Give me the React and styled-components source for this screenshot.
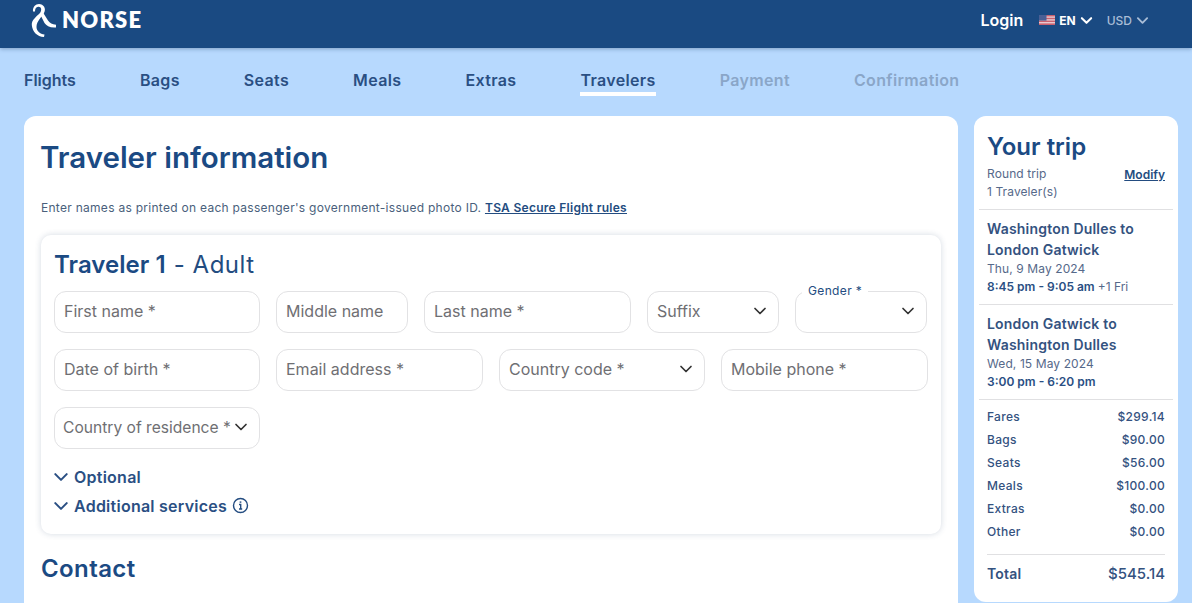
import React from "react";
import styled, { createGlobalStyle } from "styled-components";

const Global = createGlobalStyle`
  html, body { margin: 0; padding: 0; height: 100%; overflow: hidden; background: #b7d9fe; }
  body { font-family: Inter, "Liberation Sans", sans-serif; color: #1b4a83; }
  * { box-sizing: border-box; }
`;

const Page = styled.div`
  height: 603px;
  overflow: hidden;
  background: #b7d9fe;
`;
const Header = styled.header`
  height: 48px;
  background: #1a4a82;
  box-shadow: 0 1px 4px rgba(20, 50, 90, 0.35);
  display: flex;
  align-items: center;
  justify-content: space-between;
  padding: 0 43px 8px 31px;
  color: #fff;
`;
const Brand = styled.div`
  display: flex;
  align-items: center;
  gap: 5px;
`;
const BrandName = styled.span`
  font-family: Lato, sans-serif;
  font-weight: 800;
  font-size: 22px;
  letter-spacing: 1.2px;
  line-height: 24px;
`;
const HeaderRight = styled.div`
  display: flex;
  align-items: center;
  font-size: 12px;
`;
const Login = styled.span`
  font-size: 16px;
  font-weight: 600;
  margin-right: 16px;
`;
const Lang = styled.span`
  display: flex;
  align-items: center;
  gap: 4px;
  font-weight: 700;
  margin-right: 14px;
`;
const Currency = styled.span`
  display: flex;
  align-items: center;
  gap: 4px;
  color: #a9bdd6;
  font-weight: 500;
`;
const Nav = styled.nav`
  display: flex;
  gap: 64px;
  padding: 20px 24px 0;
  height: 68px;
`;
const NavItem = styled.span`
  height: 28px;
  font-size: 16px;
  font-weight: 600;
  line-height: 24px;
  letter-spacing: 0.35px;
  color: ${(p) => (p.$disabled ? "#8aa6c8" : "#2a4f83")};
  border-bottom: ${(p) => (p.$active ? "4px solid #fff" : "none")};
  &:first-child {
    letter-spacing: 0;
  }
`;
const Columns = styled.div`
  display: flex;
  gap: 16px;
  padding: 0 14px 0 24px;
`;
const Main = styled.main`
  width: 934px;
  height: 520px;
  background: #fff;
  border-radius: 12px;
  padding: 21px 17px;
`;
const Title = styled.h1`
  margin: 0 0 0 -1px;
  font-size: 29.5px;
  line-height: 40px;
  font-weight: 600;
  color: #1b4a83;
`;
const Intro = styled.p`
  margin: 22px 0 0;
  font-size: 12px;
  line-height: 18px;
  letter-spacing: 0.28px;
  color: #4a5f7c;
`;
const RuleLink = styled.a`
  font-weight: 600;
  color: #234c80;
  text-decoration: underline;
`;
const Card = styled.section`
  margin-top: 18px;
  height: 299px;
  border-radius: 10px;
  background: #fff;
  box-shadow: 0 0 6px rgba(40, 70, 110, 0.2);
  padding: 13px;
`;
const CardTitle = styled.h2`
  margin: 0 0 10px;
  font-size: 24px;
  line-height: 33px;
  font-weight: 600;
  letter-spacing: 0.05px;
  color: #1b4a83;
`;
const CardSub = styled.span`
  margin-left: 2px;
  font-weight: 400;
  letter-spacing: 0.5px;
  color: #234c80;
`;
const Form = styled.div`
  display: flex;
  flex-direction: column;
  gap: 16px;
  width: 874px;
  margin-bottom: 13px;
`;
const Row = styled.div`
  display: flex;
  gap: 16px;
`;
const Field = styled.div`
  position: relative;
  flex: 0 0 ${(p) => p.$w}px;
  min-width: 0;
  height: 42px;
  border: 1px solid #e2e2e4;
  border-radius: 12px;
  background: #fff;
  display: flex;
  align-items: center;
  justify-content: space-between;
  padding: 0 11px 2px ${(p) => (p.$tight ? "8px" : "9px")};
  font-size: ${(p) => (p.$tight ? "15.6px" : "16px")};
  color: #6f6f73;
  white-space: nowrap;
`;
const FloatLabel = styled.span`
  position: absolute;
  top: -8px;
  left: 6px;
  padding: 0 6px;
  background: #fff;
  font-size: 12px;
  line-height: 14px;
  letter-spacing: 0.35px;
  color: #234c80;
`;
const Toggle = styled.div`
  display: flex;
  align-items: center;
  gap: 5px;
  height: 29px;
  font-size: 16px;
  font-weight: 600;
  letter-spacing: 0.25px;
  color: #2a4f83;
`;
const ToggleIcon = styled.span`
  display: flex;
  margin-left: -1px;
`;
const InfoWrap = styled.span`
  display: flex;
`;
const Contact = styled.h2`
  margin: 19px 0 0;
  font-size: 24px;
  line-height: 32px;
  font-weight: 600;
  letter-spacing: 0.4px;
  color: #1b4a83;
`;
const Side = styled.aside`
  width: 204px;
  height: 486px;
  background: #fff;
  border-radius: 12px;
  padding: 15px 5px 0;
  color: #234c80;
`;
const SideBlock = styled.div`
  padding: 0 8px;
`;
const SideTitle = styled.h2`
  margin: 0 0 2px;
  font-size: 24px;
  line-height: 32px;
  font-weight: 600;
  color: #1b4a83;
`;
const SpaceRow = styled.div`
  display: flex;
  justify-content: space-between;
  align-items: center;
`;
const Small = styled.div`
  font-size: 12px;
  line-height: 18px;
  letter-spacing: 0.1px;
  color: #56698a;
`;
const Modify = styled.a`
  font-size: 12px;
  font-weight: 600;
  color: #234c80;
  text-decoration: underline;
`;
const Divider = styled.hr`
  margin: ${(p) => p.$m || "9px 0 8px"};
  border: 0;
  border-top: 1px solid #e0e0e2;
`;
const Route = styled.div`
  font-size: 14px;
  line-height: 21px;
  font-weight: 600;
  letter-spacing: 0.2px;
  color: #34527f;
`;
const Times = styled.div`
  font-size: 12px;
  line-height: 17px;
  font-weight: 600;
  color: #2a4f83;
`;
const Plus = styled.span`
  font-weight: 400;
  color: #56698a;
`;
const Price = styled(SpaceRow)`
  height: 23px;
  font-size: 12px;
  font-weight: 500;
  letter-spacing: 0.3px;
  color: #34527f;
`;
const Total = styled(SpaceRow)`
  font-size: 14px;
  line-height: 20px;
  font-weight: 600;
  letter-spacing: 0.2px;
  color: #34527f;
`;
const TotalValue = styled.span`
  font-size: 15px;
  font-weight: 500;
  letter-spacing: 0;
`;

const Chevron = ({ size = 14, width = 2, color = "currentColor" }) => (
  <svg width={size} height={size} viewBox="0 0 14 14" fill="none" stroke={color} strokeWidth={width} strokeLinecap="round" strokeLinejoin="round">
    <path d="M2 4.5 7 9.5 12 4.5" />
  </svg>
);

const Logo = () => (
  <svg width="26" height="36" viewBox="31 2 26 36" fill="#fff">
    <path d="M33 11.5C32.5 7 35.5 4 39 4 43.5 4 46.5 8.5 44 13 42 17 36.5 21 36.5 27 36.5 31 40 34 44.5 34.5L44 37C37 36.5 32.5 32 31.8 25 31.5 20 36 17 40 13 42 10 41.5 6.7 38.5 6.7 36 6.5 35 9 35 11.5Z" />
    <path d="M40 14 43 12.5 48 20.5C50 23 52 24.5 56 24.8L56 27.5C50 28 46.5 26 44.5 23Z" />
  </svg>
);

const Flag = () => (
  <svg width="16" height="10" viewBox="0 0 16 10">
    <rect width="16" height="10" fill="#e8c9cf" />
    <rect y="0" width="16" height="1.4" fill="#c9616f" />
    <rect y="2.8" width="16" height="1.4" fill="#c9616f" />
    <rect y="5.6" width="16" height="1.4" fill="#c9616f" />
    <rect y="8.4" width="16" height="1.6" fill="#c9616f" />
    <rect width="7.5" height="5.6" fill="#4a5f95" />
  </svg>
);

const Info = () => (
  <svg width="17" height="17" viewBox="0 0 17 17" fill="none" stroke="#234c80" strokeWidth="1.4">
    <circle cx="8.5" cy="8.5" r="7" />
    <path d="M7 7.5H8.7V12M7 12H10.2" />
    <path d="M8.5 4.4V5.8" strokeWidth="1.7" />
  </svg>
);

const steps = [
  { label: "Flights" },
  { label: "Bags" },
  { label: "Seats" },
  { label: "Meals" },
  { label: "Extras" },
  { label: "Travelers", active: true },
  { label: "Payment", disabled: true },
  { label: "Confirmation", disabled: true },
];

const prices = [
  ["Fares", "$299.14"],
  ["Bags", "$90.00"],
  ["Seats", "$56.00"],
  ["Meals", "$100.00"],
  ["Extras", "$0.00"],
  ["Other", "$0.00"],
];

const Select = ({ w, label, float, tight }) => (
  <Field $w={w} $tight={tight}>
    {float && <FloatLabel>{float}</FloatLabel>}
    <span>{label}</span>
    <Chevron size={14} width={1.7} color="#333" />
  </Field>
);

const Section = ({ children, extra }) => (
  <Toggle>
    <ToggleIcon>
      <Chevron size={16} width={1.8} />
    </ToggleIcon>
    {children}
    {extra}
  </Toggle>
);

export default function App() {
  return (
    <Page>
      <Global />
      <Header>
        <Brand>
          <Logo />
          <BrandName>NORSE</BrandName>
        </Brand>
        <HeaderRight>
          <Login>Login</Login>
          <Lang>
            <Flag />
            EN
            <Chevron size={13} width={2.2} />
          </Lang>
          <Currency>
            USD
            <Chevron size={13} width={2} />
          </Currency>
        </HeaderRight>
      </Header>
      <Nav>
        {steps.map((s) => (
          <NavItem key={s.label} $active={s.active} $disabled={s.disabled}>
            {s.label}
          </NavItem>
        ))}
      </Nav>
      <Columns>
        <Main>
          <Title>Traveler information</Title>
          <Intro>
            Enter names as printed on each passenger's government-issued photo ID.{" "}
            <RuleLink>TSA Secure Flight rules</RuleLink>
          </Intro>
          <Card>
            <CardTitle>
              Traveler 1 <CardSub>- Adult</CardSub>
            </CardTitle>
            <Form>
              <Row>
                <Field $w={206}>First name *</Field>
                <Field $w={132}>Middle name</Field>
                <Field $w={207}>Last name *</Field>
                <Select w={132} label="Suffix" />
                <Select w={132} label="" float="Gender *" />
              </Row>
              <Row>
                <Field $w={206}>Date of birth *</Field>
                <Field $w={207}>Email address *</Field>
                <Select w={206} label="Country code *" />
                <Field $w={207}>Mobile phone *</Field>
              </Row>
              <Row>
                <Select w={206} label="Country of residence *" tight />
              </Row>
            </Form>
            <Section>Optional</Section>
            <Section
              extra={
                <InfoWrap>
                  <Info />
                </InfoWrap>
              }
            >
              Additional services
            </Section>
          </Card>
          <Contact>Contact</Contact>
        </Main>
        <Side>
          <SideBlock>
            <SideTitle>Your trip</SideTitle>
            <SpaceRow>
              <Small>Round trip</Small>
              <Modify>Modify</Modify>
            </SpaceRow>
            <Small>1 Traveler(s)</Small>
          </SideBlock>
          <Divider $m="8px 0" />
          <SideBlock>
            <Route>Washington Dulles to London Gatwick</Route>
            <Small>Thu, 9 May 2024</Small>
            <Times>
              8:45 pm - 9:05 am <Plus>+1 Fri</Plus>
            </Times>
          </SideBlock>
          <Divider />
          <SideBlock>
            <Route>London Gatwick to Washington Dulles</Route>
            <Small>Wed, 15 May 2024</Small>
            <Times>3:00 pm - 6:20 pm</Times>
          </SideBlock>
          <Divider $m="9px 0 5px" />
          <SideBlock>
            {prices.map(([k, v]) => (
              <Price key={k}>
                <span>{k}</span>
                <span>{v}</span>
              </Price>
            ))}
            <Divider $m="11px 0 9px" />
            <Total>
              <span>Total</span>
              <TotalValue>$545.14</TotalValue>
            </Total>
          </SideBlock>
        </Side>
      </Columns>
    </Page>
  );
}
